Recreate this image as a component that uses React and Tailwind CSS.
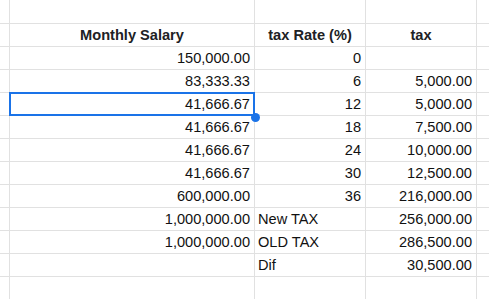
import React from "react";

const rows = [
  ["", "", "", false],
  ["Monthly Salary", "tax Rate (%)", "tax", true],
  ["150,000.00", "0", ""],
  ["83,333.33", "6", "5,000.00"],
  ["41,666.67", "12", "5,000.00", false, true],
  ["41,666.67", "18", "7,500.00"],
  ["41,666.67", "24", "10,000.00"],
  ["41,666.67", "30", "12,500.00"],
  ["600,000.00", "36", "216,000.00"],
  ["1,000,000.00", "New TAX", "256,000.00"],
  ["1,000,000.00", "OLD TAX", "286,500.00"],
  ["", "Dif", "30,500.00"],
  ["", "", ""],
];

function Cell({ w, children, align = "right", bold, selected, last }) {
  const al =
    align === "center" ? "justify-center" : align === "left" ? "justify-start pl-[3px]" : "justify-end pr-[4px]";
  return (
    <div
      className={`relative flex h-full shrink-0 items-center ${last ? "" : "border-r border-[#e1e1e1]"} ${al} ${bold ? "font-bold text-[#202124]" : "text-[#111]"} ${w}`}
    >
      {children}
      {selected && (
        <>
          <div className="pointer-events-none absolute left-[-1px] top-[-1px] bottom-[-1px] right-[-1px] border-2 border-[#1a73e8]" />
          <div className="absolute right-[-5.5px] bottom-[-6.5px] h-[9px] w-[9px] rounded-full bg-[#1a73e8]" />
        </>
      )}
    </div>
  );
}

export default function App() {
  return (
    <div
      className="h-[299px] w-[489px] overflow-hidden bg-white text-[14.6px] leading-none"
      style={{ fontFamily: '"Liberation Sans", Arial, sans-serif' }}
    >
      {rows.map((r, i) => {
        const isHeader = r[3] === true;
        const isText = ["New TAX", "OLD TAX", "Dif"].includes(r[1]);
        return (
          <div
            key={i}
            className={`flex border-b border-[#e1e1e1] ${i === 0 ? "h-[24px]" : "h-[23px]"} ${r[4] ? "relative z-10" : ""}`}
          >
            <Cell w="w-[10px]" />
            <Cell w="w-[245px]" align={isHeader ? "center" : "right"} bold={isHeader} selected={r[4]}>
              {r[0]}
            </Cell>
            <Cell w="w-[111px]" align={isHeader ? "center" : isText ? "left" : "right"} bold={isHeader}>
              {r[1]}
            </Cell>
            <Cell w="w-[111px]" align={isHeader ? "center" : "right"} bold={isHeader}>
              {r[2]}
            </Cell>
            <Cell w="flex-1" last />
          </div>
        );
      })}
    </div>
  );
}
